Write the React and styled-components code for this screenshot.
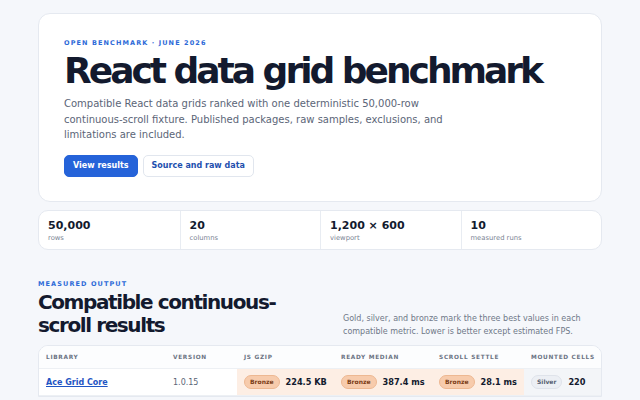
import React from "react";
import styled, { createGlobalStyle } from "styled-components";

const GlobalStyle = createGlobalStyle`
  * { box-sizing: border-box; }
  body {
    margin: 0;
    background: #f5f7fb;
    font-family: "DejaVu Sans", "Noto Sans", sans-serif;
    color: #131a2e;
  }
`;

const Page = styled.main`
  width: 564px;
  margin: 0 auto;
  padding: 13px 0 0;
`;

const Hero = styled.section`
  background: #fff;
  border: 1px solid #e5e9f0;
  border-radius: 12px;
  padding: 25px 25px 24px;
`;

const Eyebrow = styled.div`
  font-size: 6.5px;
  font-weight: 700;
  letter-spacing: 1.1px;
  text-transform: uppercase;
  color: #2d6ad8;
`;

const Title = styled.h1`
  margin: 3px 0 0;
  font-size: 36px;
  line-height: 41px;
  font-weight: 700;
  letter-spacing: -3px;
  color: #131a2e;
  white-space: nowrap;
`;

const Lead = styled.p`
  margin: 5px 0 0;
  max-width: 400px;
  font-size: 10px;
  line-height: 15.5px;
  color: #5b6577;
`;

const Actions = styled.div`
  display: flex;
  gap: 5px;
  margin-top: 12px;
`;

const Button = styled.a`
  display: inline-flex;
  align-items: center;
  height: 22px;
  padding: 0 8px;
  border-radius: 5px;
  font-size: 8px;
  font-weight: 700;
  text-decoration: none;
  border: 1px solid ${(p) => (p.primary ? "#2563d9" : "#e1e6ee")};
  background: ${(p) => (p.primary ? "#2563d9" : "#fff")};
  color: ${(p) => (p.primary ? "#fff" : "#1e4fae")};
`;

const Stats = styled.section`
  display: grid;
  grid-template-columns: repeat(4, 1fr);
  margin-top: 8px;
  background: #fff;
  border: 1px solid #e5e9f0;
  border-radius: 10px;
`;

const Stat = styled.div`
  padding: 7px 9px 6px;
  border-left: ${(p) => (p.first ? "none" : "1px solid #e8ecf2")};
`;

const StatValue = styled.div`
  font-size: 11px;
  line-height: 15px;
  font-weight: 700;
  color: #131a2e;
`;

const StatLabel = styled.div`
  font-size: 6.8px;
  line-height: 10px;
  color: #7b8494;
`;

const Results = styled.section`
  margin-top: 30px;
`;

const ResultsHead = styled.div`
  display: flex;
  justify-content: space-between;
  align-items: flex-end;
`;

const SectionTitle = styled.h2`
  margin: 3px 0 0;
  max-width: 262px;
  font-size: 20px;
  line-height: 23px;
  font-weight: 700;
  letter-spacing: -1.4px;
  color: #131a2e;
`;

const Note = styled.p`
  margin: 0 0 -1px;
  width: 259px;
  font-size: 8px;
  line-height: 13px;
  color: #6f7888;
`;

const TableCard = styled.div`
  margin-top: 8px;
  background: #fff;
  border: 1px solid #e5e9f0;
  border-radius: 10px 10px 0 0;
  overflow: hidden;
`;

const Table = styled.table`
  border-collapse: collapse;
  table-layout: fixed;
  width: 100%;
`;

const Th = styled.th`
  height: 23px;
  padding: 0 7px;
  text-align: left;
  font-size: 5.8px;
  font-weight: 700;
  letter-spacing: 0.7px;
  text-transform: uppercase;
  color: #6b7383;
  background: #fcfdfe;
  border-bottom: 1px solid #edf0f4;
  white-space: nowrap;
`;

const Td = styled.td`
  height: 27px;
  padding: 0 7px;
  font-size: 8.2px;
  white-space: nowrap;
  border-bottom: 1px solid #edf0f4;
  background: ${(p) =>
    p.medal === "bronze" ? "#fdeee4" : p.medal === "silver" ? "#f3f5f8" : "#fff"};
  color: ${(p) => (p.muted ? "#5b6577" : "#131a2e")};
`;

const LibLink = styled.a`
  font-weight: 700;
  color: #1f55c4;
  text-decoration: underline;
  font-size: 8px;
`;

const Version = styled.span`
  font-size: 8px;
`;

const Value = styled.span`
  font-weight: 700;
  margin-left: 6px;
`;

const medalStyles = {
  bronze: { bg: "#f7cbac", border: "#edb892", color: "#7a3d17" },
  silver: { bg: "#eceff4", border: "#dfe3ea", color: "#566071" },
};

const Badge = styled.span`
  display: inline-block;
  padding: 1px 5px;
  border-radius: 8px;
  font-size: 6px;
  font-weight: 700;
  line-height: 10px;
  vertical-align: 1px;
  background: ${(p) => medalStyles[p.medal].bg};
  border: 1px solid ${(p) => medalStyles[p.medal].border};
  color: ${(p) => medalStyles[p.medal].color};
`;

const stats = [
  { value: "50,000", label: "rows" },
  { value: "20", label: "columns" },
  { value: "1,200 × 600", label: "viewport" },
  { value: "10", label: "measured runs" },
];

// last column takes whatever width is left
const columns = [
  { key: "library", label: "Library", width: 127 },
  { key: "version", label: "Version", width: 71 },
  { key: "gzip", label: "JS gzip", width: 97 },
  { key: "ready", label: "Ready median", width: 98 },
  { key: "settle", label: "Scroll settle", width: 92 },
  { key: "cells", label: "Mounted cells" },
];

const rows = [
  {
    library: "Ace Grid Core",
    version: "1.0.15",
    gzip: { value: "224.5 KB", medal: "bronze" },
    ready: { value: "387.4 ms", medal: "bronze" },
    settle: { value: "28.1 ms", medal: "bronze" },
    cells: { value: "220", medal: "silver" },
  },
];

const Medal = ({ medal }) => (
  <Badge medal={medal}>{medal === "bronze" ? "Bronze" : "Silver"}</Badge>
);

export default function App() {
  return (
    <>
      <GlobalStyle />
      <Page>
        <Hero>
          <Eyebrow>Open benchmark · June 2026</Eyebrow>
          <Title>React data grid benchmark</Title>
          <Lead>
            Compatible React data grids ranked with one deterministic 50,000-row
            continuous-scroll fixture. Published packages, raw samples, exclusions, and
            limitations are included.
          </Lead>
          <Actions>
            <Button primary href="#results">View results</Button>
            <Button href="#source">Source and raw data</Button>
          </Actions>
        </Hero>

        <Stats>
          {stats.map((s, i) => (
            <Stat key={s.label} first={i === 0}>
              <StatValue>{s.value}</StatValue>
              <StatLabel>{s.label}</StatLabel>
            </Stat>
          ))}
        </Stats>

        <Results id="results">
          <ResultsHead>
            <div>
              <Eyebrow>Measured output</Eyebrow>
              <SectionTitle>Compatible continuous-scroll results</SectionTitle>
            </div>
            <Note>
              Gold, silver, and bronze mark the three best values in each compatible
              metric. Lower is better except estimated FPS.
            </Note>
          </ResultsHead>

          <TableCard>
            <Table>
              <colgroup>
                {columns.map((c) => (
                  <col key={c.key} style={c.width ? { width: c.width } : undefined} />
                ))}
              </colgroup>
              <thead>
                <tr>
                  {columns.map((c) => (
                    <Th key={c.key}>{c.label}</Th>
                  ))}
                </tr>
              </thead>
              <tbody>
                {rows.map((r) => (
                  <tr key={r.library}>
                    <Td>
                      <LibLink href="#">{r.library}</LibLink>
                    </Td>
                    <Td muted>
                      <Version>{r.version}</Version>
                    </Td>
                    {columns.slice(2).map((c) => (
                      <Td key={c.key} medal={r[c.key].medal}>
                        <Medal medal={r[c.key].medal} />
                        <Value>{r[c.key].value}</Value>
                      </Td>
                    ))}
                  </tr>
                ))}
              </tbody>
            </Table>
          </TableCard>
        </Results>
      </Page>
    </>
  );
}
